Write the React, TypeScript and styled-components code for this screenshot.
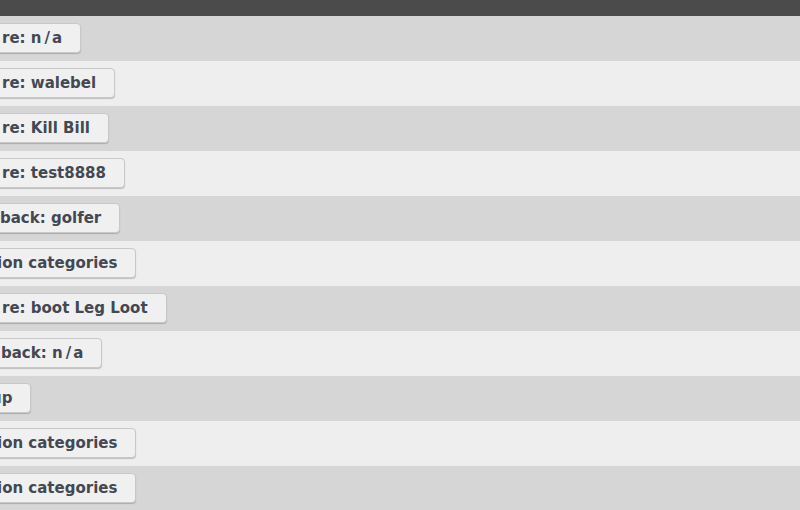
import styled, { createGlobalStyle } from 'styled-components';

const GlobalStyle = createGlobalStyle`
  html, body {
    margin: 0;
    padding: 0;
    background: #d6d6d6;
    overflow: hidden;
  }
`;

// the left part of each button is scrolled out of view in the reference;
// shift says where the visible part of the label starts
const items = [
  { text: 're: n', rest: 'a', shift: 2 },
  { text: 're: walebel', shift: 2 },
  { text: 're: Kill Bill', shift: 2 },
  { text: 're: test8888', shift: 2 },
  { text: 'back: golfer', shift: 0 },
  { text: 'ion categories', shift: -3 },
  { text: 're: boot Leg Loot', shift: 2 },
  { text: 'back: n', rest: 'a', shift: 1 },
  { text: 'up', shift: -9 },
  { text: 'ion categories', shift: -3 },
  { text: 'ion categories', shift: -3 },
];

const App = () => {
  return (
    <Page>
      <GlobalStyle />
      <TopBar />
      <List>
        {items.map((item, i) => (
          <Row key={i} $odd={i % 2 === 1}>
            <ActionButton type="button" $shift={item.shift}>
              {item.text}
              {item.rest && (
                <>
                  <Slash>/</Slash>
                  {item.rest}
                </>
              )}
            </ActionButton>
          </Row>
        ))}
      </List>
    </Page>
  );
};

const Page = styled.div`
  width: 800px;
  height: 510px;
  overflow: hidden;
  font-family: 'DejaVu Sans', Verdana, sans-serif;
`;

const TopBar = styled.div`
  height: 16px;
  background: #4b4b4b;
`;

const List = styled.div`
  display: flex;
  flex-direction: column;
`;

const Row = styled.div<{ $odd: boolean }>`
  height: 45px;
  box-sizing: border-box;
  padding-top: 7px;
  display: flex;
  align-items: flex-start;
  background: ${(p) => (p.$odd ? '#eeeeee' : '#d6d6d6')};
`;

const ActionButton = styled.button<{ $shift: number }>`
  margin-left: ${(p) => p.$shift - 24}px;
  height: 30px;
  padding: 0 18px 0 23px;
  border: 1px solid #c8c8c8;
  border-radius: 4px;
  background: #f0f0f0;
  box-shadow: 0 1px 1px rgba(0, 0, 0, 0.2);
  color: #434852;
  font-family: 'DejaVu Sans', Verdana, sans-serif;
  font-weight: bold;
  font-size: 15px;
  white-space: nowrap;
  cursor: pointer;
`;

const Slash = styled.span`
  padding: 0 2px 0 3px;
`;

export default App;
